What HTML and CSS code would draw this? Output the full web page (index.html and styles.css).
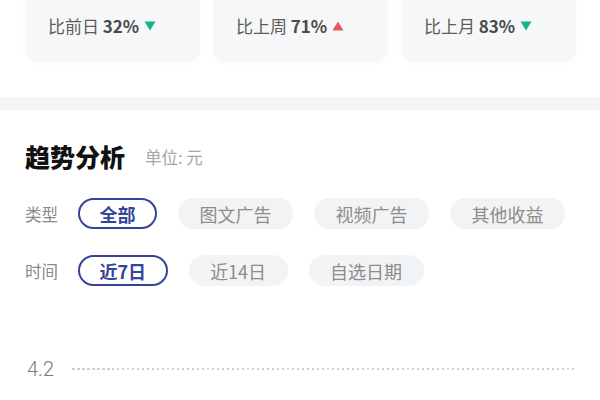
FILE: index.html
```html
<!DOCTYPE html>
<html lang="zh-CN">
<head>
<meta charset="utf-8">
<title>趋势分析</title>
<link rel="stylesheet" href="styles.css">
</head>
<body>
<div class="page">
  <section class="stats">
    <div class="card">
      <div class="compare">比前日 <b>32%</b>
        <svg class="tri" width="12" height="10" viewBox="0 0 12 10"><path d="M0.5 0.5 H11.5 L6 9.5 Z" fill="#19b088"/></svg>
      </div>
    </div>
    <div class="card">
      <div class="compare">比上周 <b>71%</b>
        <svg class="tri" width="12" height="10" viewBox="0 0 12 10"><path d="M0.5 9.5 H11.5 L6 0.5 Z" fill="#e5575d"/></svg>
      </div>
    </div>
    <div class="card">
      <div class="compare">比上月 <b>83%</b>
        <svg class="tri" width="12" height="10" viewBox="0 0 12 10"><path d="M0.5 0.5 H11.5 L6 9.5 Z" fill="#19b088"/></svg>
      </div>
    </div>
  </section>

  <div class="divider"></div>

  <section class="trend">
    <div class="title-row">
      <h2 class="title">趋势分析</h2>
      <span class="unit">单位: 元</span>
    </div>

    <div class="filter-row">
      <span class="label">类型</span>
      <span class="chip active">全部</span>
      <span class="chip">图文广告</span>
      <span class="chip">视频广告</span>
      <span class="chip">其他收益</span>
    </div>

    <div class="filter-row second">
      <span class="label">时间</span>
      <span class="chip active">近7日</span>
      <span class="chip">近14日</span>
      <span class="chip">自选日期</span>
    </div>

    <div class="chart">
      <div class="grid-row">
        <span class="axis">4.2</span>
        <span class="grid-line"></span>
      </div>
    </div>
  </section>
</div>
</body>
</html>
```

FILE: styles.css
```css
* { box-sizing: border-box; }

html, body {
  margin: 0;
  padding: 0;
  background: #ffffff;
}

body {
  width: 600px;
  height: 400px;
  overflow: hidden;
  font-family: "Noto Sans CJK SC", "Noto Sans", sans-serif;
  color: #333;
}

.stats {
  display: flex;
  gap: 13px;
  padding: 0 24px 0 25px;
  margin-top: -38px;
}

.card {
  flex: 1;
  height: 100px;
  background: #f6f7f9;
  border-radius: 13px;
  box-shadow: 0 1px 6px rgba(0, 0, 0, 0.025);
  display: flex;
  flex-direction: column;
  justify-content: flex-end;
  padding: 0 0 26px 23px;
}

.compare {
  display: flex;
  align-items: center;
  font-size: 17px;
  line-height: 20px;
  color: #5c5c5c;
  white-space: pre;
}

.compare b {
  font-weight: 700;
  color: #4a4a4a;
}

.tri {
  margin-left: 5px;
}

.divider {
  height: 13px;
  background: #f5f5f7;
  margin-top: 35px;
}

.trend {
  padding: 29px 25px 0 25px;
}

.title-row {
  display: flex;
  align-items: center;
  height: 34px;
}

.title {
  margin: 0;
  font-size: 25px;
  font-weight: 900;
  color: #111111;
  line-height: 34px;
}

.unit {
  margin-left: 20px;
  font-size: 16.5px;
  color: #a6a6a6;
  padding-top: 2px;
}

.filter-row {
  display: flex;
  align-items: center;
  gap: 21px;
  margin-top: 25px;
}

.filter-row.second {
  margin-top: 26px;
}

.label {
  width: 32px;
  font-size: 16.5px;
  color: #8a8a8a;
  white-space: nowrap;
}

.chip {
  height: 31px;
  display: inline-flex;
  align-items: center;
  padding: 0 19.5px;
  border: 2px solid transparent;
  border-radius: 16px;
  background: #f2f3f5;
  font-size: 18px;
  color: #8c8c8c;
  white-space: nowrap;
}

.chip.active {
  background: #ffffff;
  border-color: #34449a;
  color: #34449a;
  font-weight: 700;
}

.chart {
  margin-top: 71px;
}

.grid-row {
  display: flex;
  align-items: center;
  height: 24px;
}

.axis {
  width: 33px;
  padding-left: 2px;
  font-family: "Roboto", "Liberation Sans", sans-serif;
  font-weight: 300;
  font-size: 20px;
  color: #7a7a7a;
}

.grid-line {
  flex: 1;
  margin-left: 14px;
  height: 1.5px;
  background: repeating-linear-gradient(90deg, #cfcfcf 0 2.5px, transparent 2.5px 5px);
}
```
